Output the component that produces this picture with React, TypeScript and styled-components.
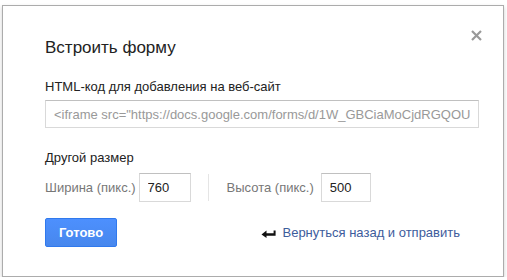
import React from 'react';
import styled, { createGlobalStyle } from 'styled-components';

const GlobalStyle = createGlobalStyle`
  body {
    margin: 0;
    background: #fff;
    font-family: "Liberation Sans", Arial, sans-serif;
  }
`;

const Dialog = styled.div`
  position: relative;
  box-sizing: border-box;
  margin: 5px 0 0 2px;
  width: 502px;
  height: 272px;
  border: 1px solid #acacac;
  box-shadow: 0 2px 4px rgba(0, 0, 0, 0.2);
  background: #fff;
  padding: 32px 0 0 42px;
  color: #222;
`;

const Close = styled.button`
  position: absolute;
  top: 18px;
  right: 16px;
  width: 22px;
  height: 22px;
  padding: 0;
  border: 0;
  background: none;
  display: flex;
  align-items: center;
  justify-content: center;
`;

const Title = styled.h1`
  margin: 0;
  font-size: 17px;
  line-height: 20px;
  font-weight: normal;
  color: #222;
`;

const Label = styled.div<{ $top: number }>`
  margin-top: ${p => p.$top}px;
  font-size: 13px;
  line-height: 16px;
  color: #222;
`;

const CodeInput = styled.input`
  box-sizing: border-box;
  display: block;
  margin-top: 5px;
  width: 434px;
  height: 28px;
  border: 1px solid #d9d9d9;
  border-top-color: #c0c0c0;
  padding: 0 8px;
  font-family: inherit;
  font-size: 13px;
  color: #999;
  outline: none;
`;

const SizeRow = styled.div`
  display: flex;
  align-items: center;
  margin-top: 7px;
  height: 29px;
`;

const SizeLabel = styled.span<{ $gap: number }>`
  font-size: 13px;
  color: #777;
  margin-right: ${p => p.$gap}px;
`;

const SizeInput = styled.input<{ $w: number }>`
  box-sizing: border-box;
  width: ${p => p.$w}px;
  height: 29px;
  border: 1px solid #d9d9d9;
  border-top-color: #c0c0c0;
  padding: 0 8px;
  font-family: inherit;
  font-size: 13px;
  color: #222;
  outline: none;
`;

const Divider = styled.div`
  width: 1px;
  height: 27px;
  background: #e5e5e5;
  margin: 0 18px 0 17px;
`;

const Footer = styled.div`
  display: flex;
  align-items: center;
  justify-content: space-between;
  margin-top: 16px;
  width: 415px;
`;

const Done = styled.button`
  box-sizing: border-box;
  width: 72px;
  height: 29px;
  border: 1px solid #3079ed;
  border-radius: 2px;
  background: linear-gradient(#4d90fe, #4787ed);
  color: #fff;
  font-family: inherit;
  font-size: 13px;
  font-weight: bold;
`;

const BackLink = styled.a`
  display: flex;
  align-items: center;
  gap: 6px;
  font-size: 13px;
  color: #3d5c9c;
  text-decoration: none;
`;

const App = () => (
  <>
    <GlobalStyle />
    <Dialog>
      <Close aria-label="Закрыть">
        <svg width="11" height="11" viewBox="0 0 11 11">
          <path d="M1 1L10 10M10 1L1 10" stroke="#999" strokeWidth="2.2" />
        </svg>
      </Close>
      <Title>Встроить форму</Title>
      <Label $top={21}>HTML-код для добавления на веб-сайт</Label>
      <CodeInput
        readOnly
        value={'<iframe src="https://docs.google.com/forms/d/1W_GBCiaMoCjdRGQOUd/viewform?embedded=true" width="760" height="500"></iframe>'}
      />
      <Label $top={22}>Другой размер</Label>
      <SizeRow>
        <SizeLabel $gap={3}>Ширина (пикс.)</SizeLabel>
        <SizeInput $w={52} defaultValue="760" />
        <Divider />
        <SizeLabel $gap={7}>Высота (пикс.)</SizeLabel>
        <SizeInput $w={50} defaultValue="500" />
      </SizeRow>
      <Footer>
        <Done>Готово</Done>
        <BackLink href="#">
          <svg width="15" height="10" viewBox="0 0 15 10">
            <path d="M0.5 6.5L5.5 2.5V5.2H12.6V2.5H14.6V7.8H5.5V10Z" fill="#111" />
          </svg>
          Вернуться назад и отправить
        </BackLink>
      </Footer>
    </Dialog>
  </>
);

export default App;
